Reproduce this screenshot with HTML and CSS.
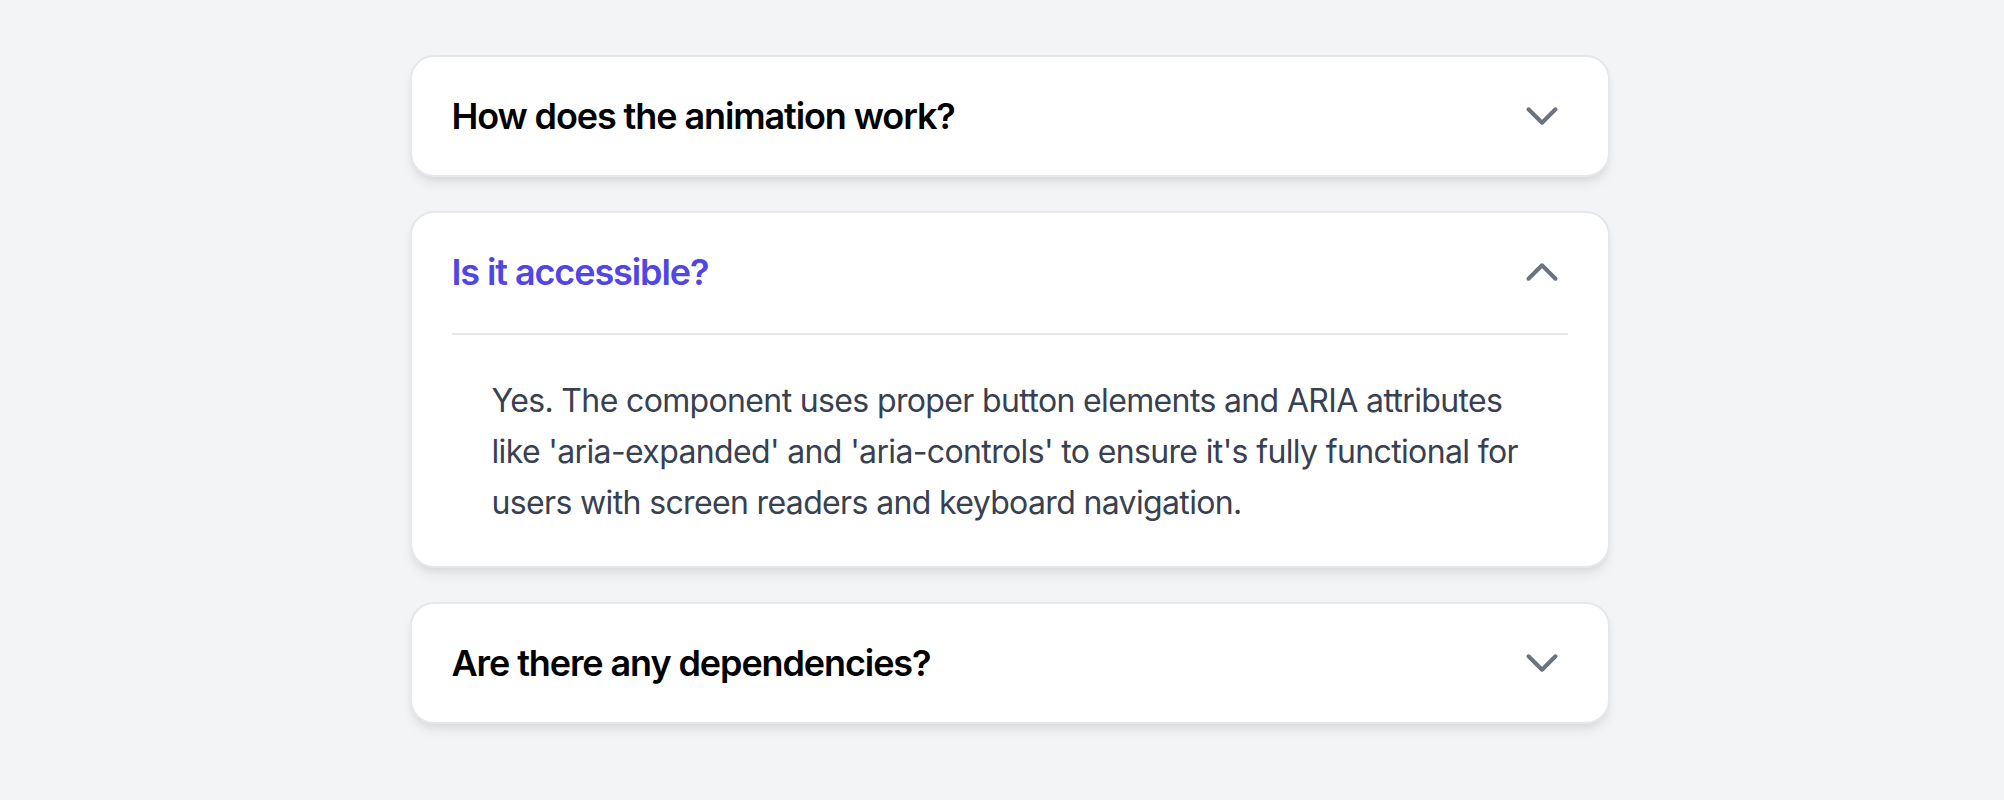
FILE: index.html
```html
<!DOCTYPE html>
<html lang="en">
<head>
<meta charset="utf-8">
<title>FAQ Accordion</title>
<link rel="stylesheet" href="styles.css">
</head>
<body>
<main class="page">
  <div class="accordion">
    <section class="item">
      <button class="header" aria-expanded="false">
        <span class="title">How does the animation work?</span>
        <svg class="chev" viewBox="0 0 24 24" fill="none" stroke="currentColor" stroke-width="2" stroke-linecap="round" stroke-linejoin="round"><path d="M5.25 8.625 12 15.375 18.75 8.625"/></svg>
      </button>
    </section>
    <section class="item open">
      <button class="header" aria-expanded="true" aria-controls="p2">
        <span class="title">Is it accessible?</span>
        <svg class="chev" viewBox="0 0 24 24" fill="none" stroke="currentColor" stroke-width="2" stroke-linecap="round" stroke-linejoin="round"><path d="M5.25 15.375 12 8.625 18.75 15.375"/></svg>
      </button>
      <div class="panel" id="p2">
        <div class="panel-inner">
          <p class="answer">Yes. The component uses proper button elements and ARIA attributes like 'aria-expanded' and 'aria-controls' to ensure it's fully functional for users with screen readers and keyboard navigation.</p>
        </div>
      </div>
    </section>
    <section class="item">
      <button class="header" aria-expanded="false">
        <span class="title">Are there any dependencies?</span>
        <svg class="chev" viewBox="0 0 24 24" fill="none" stroke="currentColor" stroke-width="2" stroke-linecap="round" stroke-linejoin="round"><path d="M5.25 8.625 12 15.375 18.75 8.625"/></svg>
      </button>
    </section>
  </div>
</main>
</body>
</html>
```
FILE: styles.css
```css
* { box-sizing: border-box; }
html, body { margin: 0; padding: 0; }
body {
  background: #f3f4f6;
  font-family: Inter, "Noto Sans", "Liberation Sans", sans-serif;
}
.page {
  padding: 55px 0 40px 15px;
}
.accordion {
  width: 1200px;
  margin: 0 auto;
  display: flex;
  flex-direction: column;
  gap: 34px;
}
.item {
  background: #fff;
  border: 2px solid #e5e7eb;
  border-radius: 24px;
  box-shadow: 0 8px 12px -2px rgba(0,0,0,0.08), 0 4px 8px -4px rgba(0,0,0,0.08);
}
.header {
  width: 100%;
  height: 118px;
  padding: 0 42px 0 40px;
  display: flex;
  align-items: center;
  justify-content: space-between;
  background: none;
  border: 0;
  font: inherit;
  text-align: left;
  cursor: pointer;
}
.title {
  font-size: 36px;
  font-weight: 600;
  line-height: 40px;
  letter-spacing: -1.1px;
  color: #000;
}
.open .title { color: #4f46e5; }
.chev {
  width: 48px;
  height: 48px;
  color: #6b7280;
  flex: none;
}
.panel {
  padding: 2px 40px 0;
}
.panel-inner {
  border-top: 2px solid #e5e7eb;
  padding: 40px 40px 38px;
}
.answer {
  margin: 0;
  font-size: 32px;
  line-height: 51px;
  letter-spacing: -0.02em;
  color: #374151;
}
```
